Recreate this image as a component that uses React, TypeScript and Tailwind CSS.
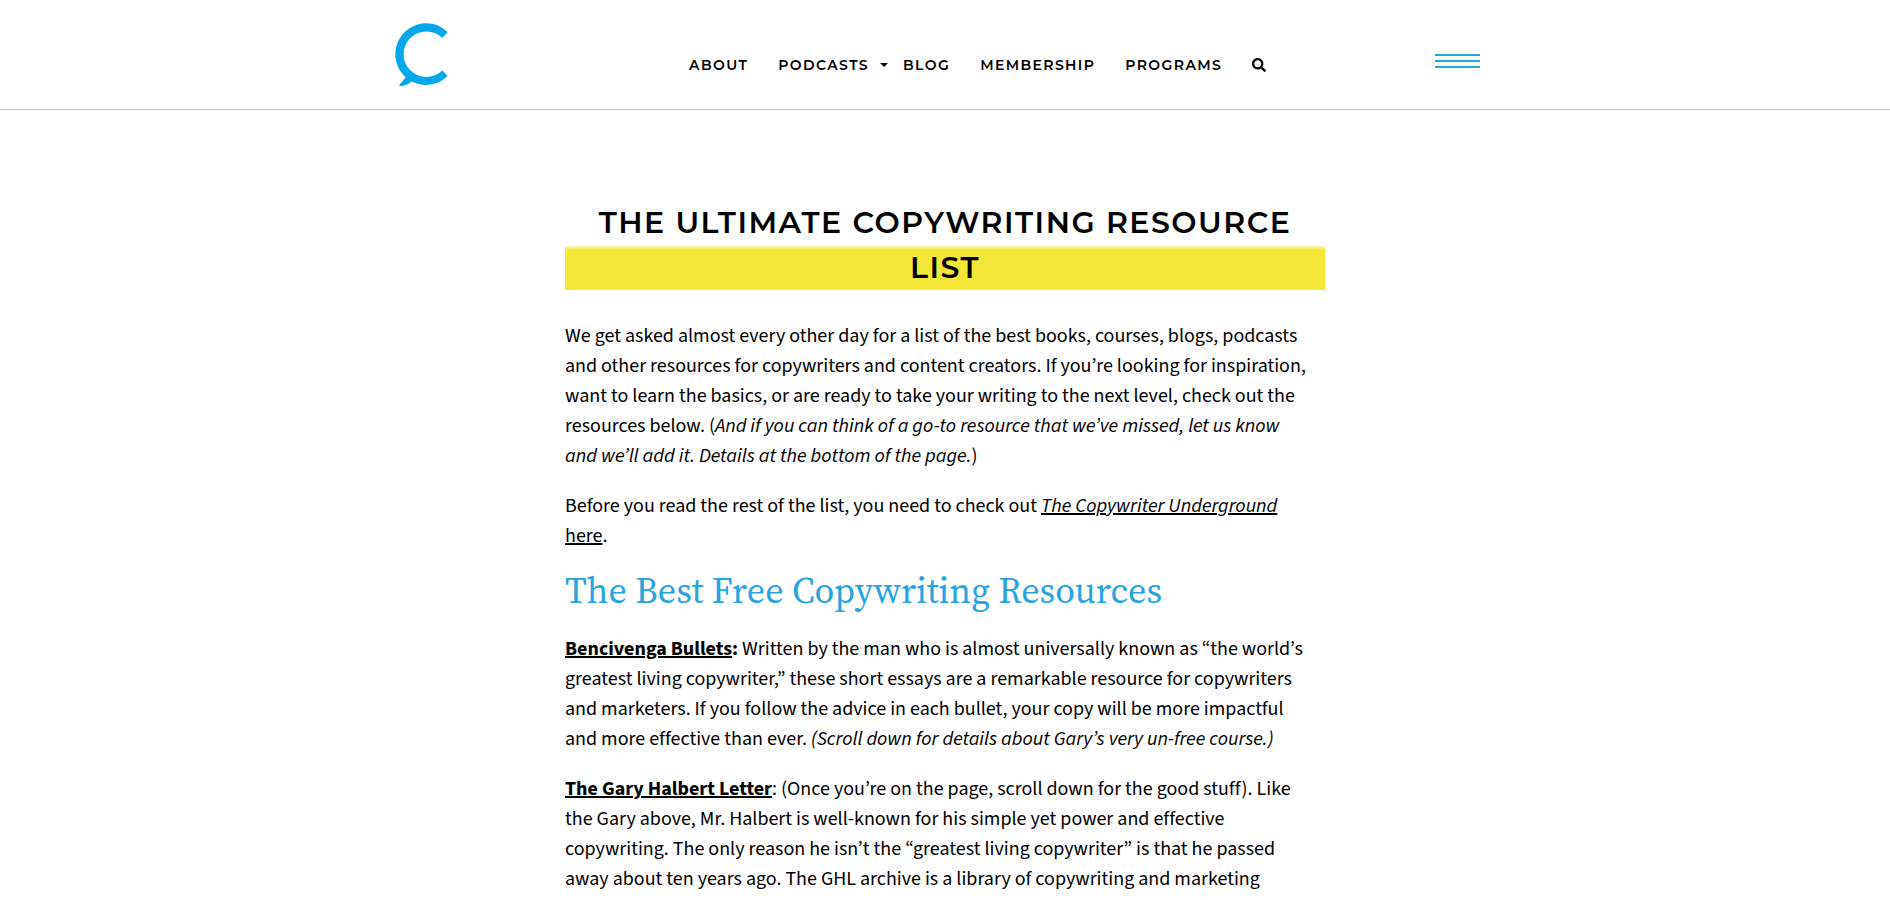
import { FaSearch } from "react-icons/fa";
import type { ReactNode } from "react";

function Logo() {
  return (
    <svg viewBox="0 0 54 64" className="block h-[64px] w-[54px]" aria-hidden="true">
      <path
        fill="#00a7e9"
        d="M52.6 9.2 47.2 14.8A22.8 22.8 0 1 0 47.4 47.4L52.6 52.9A31 31 0 0 1 16.6 58.5C13 61.5 9 63.3 4.5 63L4.2 62.2 10.7 54.3A31 31 0 0 1 31.2 0.2C39.5 0.2 47 3.5 52.6 9.2Z"
      />
    </svg>
  );
}

function NavLink({ children }: { children: ReactNode }) {
  return (
    <a href="#" className="hover:text-[#27a4e2]">
      {children}
    </a>
  );
}

function Header() {
  return (
    <header className="border-b border-[#bdbdbd]">
      <div className="mx-auto flex max-w-[1100px] items-start pt-[23px] pr-[15px] pb-[22px]">
        <a href="#" aria-label="Home">
          <Logo />
        </a>
        <nav
          aria-label="Main"
          className="ml-[240px] flex items-center gap-[30px] pt-8 font-['Montserrat',Inter,sans-serif] text-sm font-semibold tracking-widest text-black"
        >
          <NavLink>ABOUT</NavLink>
          <div className="flex items-center">
            <NavLink>PODCASTS</NavLink>
            <button
              type="button"
              aria-label="Open podcasts menu"
              className="mr-[-15px] ml-[11px] h-1 w-2 bg-black [clip-path:polygon(0_0,100%_0,50%_100%)]"
            />
          </div>
          <NavLink>BLOG</NavLink>
          <NavLink>MEMBERSHIP</NavLink>
          <NavLink>PROGRAMS</NavLink>
          <button type="button" aria-label="Search">
            <FaSearch className="size-[14px]" />
          </button>
        </nav>
        <button type="button" aria-label="Open menu" className="mt-[31px] ml-auto flex w-[45px] flex-col gap-1">
          <span className="h-0.5 w-full bg-[#27a4e2]" />
          <span className="h-0.5 w-full bg-[#27a4e2]" />
          <span className="h-0.5 w-full bg-[#27a4e2]" />
        </button>
      </div>
    </header>
  );
}

function TextLink({ children }: { children: ReactNode }) {
  return (
    <a href="#" className="underline decoration-2 underline-offset-1">
      {children}
    </a>
  );
}

function Paragraph({ children }: { children: ReactNode }) {
  return <p className="mb-5 pr-4">{children}</p>;
}

export default function App() {
  return (
    <div className="h-screen overflow-hidden bg-white text-black">
      <Header />
      <main className="mx-auto max-w-[760px] pt-[90px] font-['Source_Sans_Pro','Source_Sans_3','Noto_Sans_CJK_KR',sans-serif] text-[20px] leading-[30px] [font-variant-ligatures:none]">
        <h1 className="mb-[31px] bg-[linear-gradient(transparent_50%,#f3e835_55%)] text-center font-['Montserrat',Inter,sans-serif] text-[30px] leading-[45px] font-semibold tracking-wider">
          THE ULTIMATE COPYWRITING RESOURCE LIST
        </h1>
        <Paragraph>
          We get asked almost every other day for a list of the best books, courses, blogs, podcasts and other
          resources for copywriters and content creators. If you’re looking for inspiration, want to learn the
          basics, or are ready to take your writing to the next level, check out the resources below. (
          <em>
            And if you can think of a go-to resource that we’ve missed, let us know and we’ll add it. Details at the
            bottom of the page.
          </em>
          )
        </Paragraph>
        <Paragraph>
          Before you read the rest of the list, you need to check out{" "}
          <TextLink>
            <em>The Copywriter Underground</em> here
          </TextLink>
          .
        </Paragraph>
        <h2 className="mb-6 font-['Source_Serif_Pro','Source_Serif_4','Noto_Serif','Liberation_Serif',serif] text-[36px] leading-[39px] text-[#27a4e2]">
          The Best Free Copywriting Resources
        </h2>
        <Paragraph>
          <TextLink>
            <strong>Bencivenga Bullets</strong>
          </TextLink>
          <strong>:</strong> Written by the man who is almost universally known as “the world’s greatest living
          copywriter,” these short essays are a remarkable resource for copywriters and marketers. If you follow the
          advice in each bullet, your copy will be more impactful and more effective than ever.{" "}
          <em>(Scroll down for details about Gary’s very un-free course.)</em>
        </Paragraph>
        <Paragraph>
          <TextLink>
            <strong>The Gary Halbert Letter</strong>
          </TextLink>
          : (Once you’re on the page, scroll down for the good stuff). Like the Gary above, Mr. Halbert is well-known
          for his simple yet power and effective copywriting. The only reason he isn’t the “greatest living copywriter”
          is that he passed away about ten years ago. The GHL archive is a library of copywriting and marketing
        </Paragraph>
      </main>
    </div>
  );
}
